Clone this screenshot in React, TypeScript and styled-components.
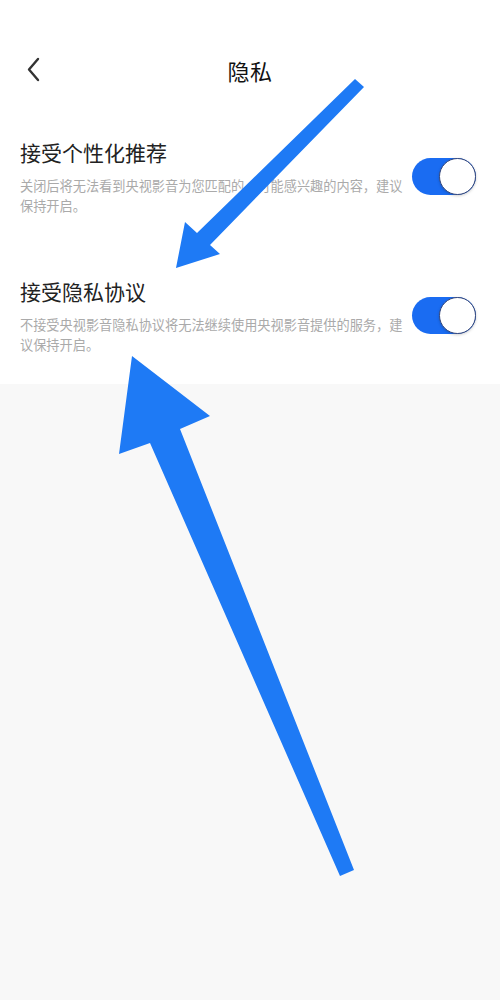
import styled, { createGlobalStyle } from "styled-components";

const GlobalStyle = createGlobalStyle`
  html, body {
    margin: 0;
    padding: 0;
    background: #f8f8f8;
  }
  * {
    box-sizing: border-box;
  }
`;

const settings = [
  {
    title: "接受个性化推荐",
    desc: "关闭后将无法看到央视影音为您匹配的、可能感兴趣的内容，建议保持开启。",
  },
  {
    title: "接受隐私协议",
    desc: "不接受央视影音隐私协议将无法继续使用央视影音提供的服务，建议保持开启。",
  },
];

const App = () => {
  return (
    <Page>
      <GlobalStyle />
      <Top>
        <Header>
          <Back aria-label="back">
            <svg width="20" height="28" viewBox="0 0 20 28">
              <polyline
                points="13,3 4,13.5 13,24"
                fill="none"
                stroke="#333"
                strokeWidth="2.4"
                strokeLinecap="round"
                strokeLinejoin="round"
              />
            </svg>
          </Back>
          <Title>隐私</Title>
        </Header>
        <List>
          {settings.map((s) => (
            <Row key={s.title}>
              <Texts>
                <RowTitle>{s.title}</RowTitle>
                <Desc>{s.desc}</Desc>
              </Texts>
              <Toggle $on>
                <Knob />
              </Toggle>
            </Row>
          ))}
        </List>
      </Top>

      <Overlay width="500" height="1000" viewBox="0 0 500 1000">
        <polygon
          points="355,79 364,87 210,245 220,254 176,268 185,222 197,233"
          fill="#1e7af5"
        />
        <polygon
          points="132,356 210,416 180,429 354,870 340,876 150,443 119,454"
          fill="#1e7af5"
        />
      </Overlay>
    </Page>
  );
};

export default App;

const Page = styled.div`
  position: relative;
  width: 500px;
  min-height: 1000px;
  background: #f8f8f8;
  font-family: "Noto Sans CJK SC", "Noto Sans", sans-serif;
  overflow: hidden;
`;

const Top = styled.div`
  background: #ffffff;
  padding: 40px 0 29px;
`;

const Header = styled.div`
  height: 60px;
  display: flex;
  align-items: center;
  justify-content: center;
  position: relative;
`;

const Back = styled.div`
  position: absolute;
  left: 25px;
  top: 16px;
  width: 20px;
  height: 28px;
  display: flex;
`;

const Title = styled.div`
  font-size: 22px;
  color: #111;
  letter-spacing: 0.5px;
`;

const List = styled.div`
  display: flex;
  flex-direction: column;
  gap: 60px;
  padding: 37px 24px 0 20px;
`;

const Row = styled.div`
  display: flex;
  align-items: center;
  justify-content: space-between;
`;

const Texts = styled.div`
  width: 388px;
  display: flex;
  flex-direction: column;
`;

const RowTitle = styled.div`
  font-size: 21px;
  line-height: 30px;
  color: #222;
  margin-bottom: 9px;
`;

const Desc = styled.div`
  font-size: 13.2px;
  line-height: 20px;
  color: #aaaaaa;
`;

const Toggle = styled.div<{ $on?: boolean }>`
  width: 64px;
  height: 37px;
  border-radius: 19px;
  background: ${(p) => (p.$on ? "#1a6cf2" : "#ddd")};
  display: flex;
  align-items: center;
  justify-content: ${(p) => (p.$on ? "flex-end" : "flex-start")};
  flex-shrink: 0;
`;

const Knob = styled.div`
  width: 37px;
  height: 37px;
  border-radius: 50%;
  background: #fff;
  border: 1.5px solid #34467a;
  box-shadow: 0 1px 3px rgba(0, 0, 0, 0.2);
`;

const Overlay = styled.svg`
  position: absolute;
  left: 0;
  top: 0;
  pointer-events: none;
`;
